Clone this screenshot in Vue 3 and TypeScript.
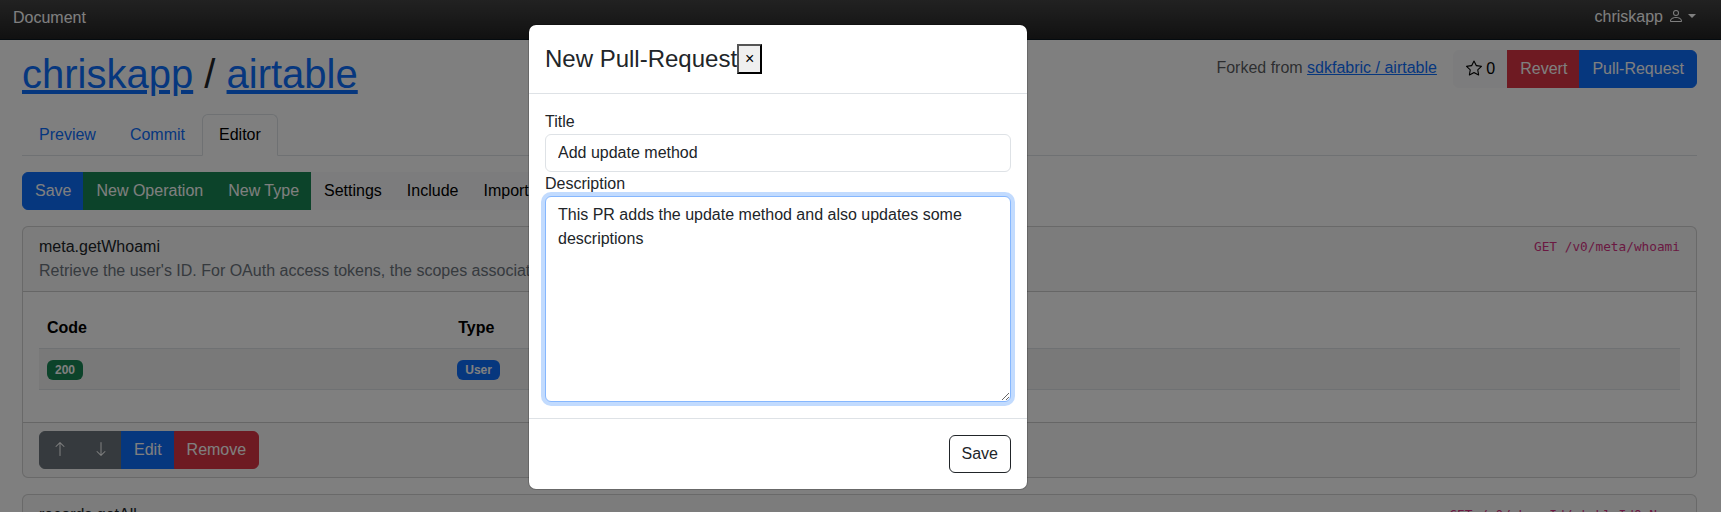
<script setup lang="ts">
import { ref } from 'vue'

interface ToolButton {
  label: string
  variant: 'primary' | 'success' | 'light'
}

const tabs: string[] = ['Preview', 'Commit', 'Editor']
const activeTab = ref('Editor')

const tools: ToolButton[] = [
  { label: 'Save', variant: 'primary' },
  { label: 'New Operation', variant: 'success' },
  { label: 'New Type', variant: 'success' },
  { label: 'Settings', variant: 'light' },
  { label: 'Include', variant: 'light' },
  { label: 'Import', variant: 'light' },
]

const title = ref('Add update method')
const description = ref('This PR adds the update method and also updates some descriptions')
</script>

<template>
  <div class="screen">
    <nav class="navbar">
      <span class="brand">Document</span>
      <span class="account">
        chriskapp
        <svg class="icon person" viewBox="0 0 16 16" fill="currentColor">
          <path d="M8 8a3 3 0 1 0 0-6 3 3 0 0 0 0 6m2-3a2 2 0 1 1-4 0 2 2 0 0 1 4 0m4 8c0 1-1 1-1 1H3s-1 0-1-1 1-4 6-4 6 3 6 4m-1-.004c-.001-.246-.154-.986-.832-1.664C11.516 10.68 10.289 10 8 10s-3.516.68-4.168 1.332c-.678.678-.83 1.418-.832 1.664z" />
        </svg>
        <i class="caret"></i>
      </span>
    </nav>

    <main class="page">
      <header class="head">
        <h1><a>chriskapp</a> / <a>airtable</a></h1>
        <div class="head-right">
          <span class="forked">Forked from <a>sdkfabric / airtable</a></span>
          <div class="group">
            <button class="btn light">
              <svg class="icon" viewBox="0 0 16 16" fill="currentColor">
                <path d="M2.866 14.85c-.078.444.36.791.746.593l4.39-2.256 4.389 2.256c.386.198.824-.149.746-.592l-.83-4.73 3.522-3.356c.33-.314.16-.888-.282-.95l-4.898-.696L8.465.792a.513.513 0 0 0-.927 0L5.354 5.12l-4.898.696c-.441.062-.612.636-.283.95l3.523 3.356-.83 4.73zm4.905-2.767-3.686 1.894.694-3.957a.56.56 0 0 0-.163-.505L1.71 6.745l4.052-.576a.53.53 0 0 0 .393-.288L8 2.223l1.847 3.658a.53.53 0 0 0 .393.288l4.052.575-2.906 2.77a.56.56 0 0 0-.163.506l.694 3.957-3.686-1.894a.5.5 0 0 0-.461 0z" />
              </svg>
              0
            </button>
            <button class="btn danger">Revert</button>
            <button class="btn primary">Pull-Request</button>
          </div>
        </div>
      </header>

      <ul class="tabs">
        <li v-for="tab in tabs" :key="tab" :class="{ active: tab === activeTab }">{{ tab }}</li>
      </ul>

      <div class="group toolbar">
        <button v-for="tool in tools" :key="tool.label" class="btn" :class="tool.variant">{{ tool.label }}</button>
      </div>

      <section class="card">
        <div class="card-header">
          <div>
            <div>meta.getWhoami</div>
            <div class="muted">Retrieve the user's ID. For OAuth access tokens, the scopes associated with the token</div>
          </div>
          <code>GET /v0/meta/whoami</code>
        </div>
        <div class="card-body">
          <table>
            <thead>
              <tr><th class="code-col">Code</th><th>Type</th></tr>
            </thead>
            <tbody>
              <tr>
                <td><span class="badge success">200</span></td>
                <td><span class="badge primary">User</span></td>
              </tr>
            </tbody>
          </table>
        </div>
        <div class="card-footer">
          <div class="group">
            <button class="btn secondary">
              <svg class="icon" viewBox="0 0 16 16" fill="currentColor">
                <path fill-rule="evenodd" d="M8 15a.5.5 0 0 0 .5-.5V2.707l3.146 3.147a.5.5 0 0 0 .708-.708l-4-4a.5.5 0 0 0-.708 0l-4 4a.5.5 0 1 0 .708.708L7.5 2.707V14.5a.5.5 0 0 0 .5.5" />
              </svg>
            </button>
            <button class="btn secondary">
              <svg class="icon" viewBox="0 0 16 16" fill="currentColor">
                <path fill-rule="evenodd" d="M8 1a.5.5 0 0 1 .5.5v11.793l3.146-3.147a.5.5 0 0 1 .708.708l-4 4a.5.5 0 0 1-.708 0l-4-4a.5.5 0 0 1 .708-.708L7.5 13.293V1.5A.5.5 0 0 1 8 1" />
              </svg>
            </button>
            <button class="btn primary">Edit</button>
            <button class="btn danger">Remove</button>
          </div>
        </div>
      </section>

      <section class="card">
        <div class="card-header">
          <div>records.getAll</div>
          <code>GET /v0/:baseId/:tableIdOrName</code>
        </div>
      </section>
    </main>

    <div class="backdrop"></div>

    <div class="modal" role="dialog">
      <div class="modal-header">
        <h4>New Pull-Request</h4>
        <button class="close">×</button>
      </div>
      <div class="modal-body">
        <label for="title">Title</label>
        <input id="title" v-model="title" class="control" type="text" />
        <label for="description">Description</label>
        <textarea id="description" v-model="description" class="control focused" rows="8" spellcheck="false"></textarea>
      </div>
      <div class="modal-footer">
        <button class="btn outline">Save</button>
      </div>
    </div>
  </div>
</template>

<style>
body {
  margin: 0;
  overflow: hidden;
}
</style>

<style scoped>
* {
  box-sizing: border-box;
}

.screen {
  position: relative;
  height: 512px;
  overflow: hidden;
  background: #fff;
  color: #212529;
  font: 16px/24px "Liberation Sans", Arial, sans-serif;
}

.navbar {
  display: flex;
  justify-content: space-between;
  height: 40px;
  padding: 5px 25px 0 13px;
  background: linear-gradient(#444, #222);
  border-bottom: 1px solid #0a161e;
  color: #fff;
}

.brand {
  padding-top: 1px;
}

.account {
  display: flex;
  align-items: center;
  height: 24px;
}

.icon {
  display: inline-block;
  width: 16px;
  height: 16px;
  vertical-align: -2px;
}

.person {
  margin: 0 4px 2px 5px;
}

.caret {
  margin-bottom: 2px;
  border-top: 4.8px solid;
  border-left: 4.8px solid transparent;
  border-right: 4.8px solid transparent;
}

.page {
  padding: 10px 24px 0 22px;
}

.head {
  display: flex;
  justify-content: space-between;
  height: 64px;
}

h1 {
  margin: 0;
  font-size: 40px;
  font-weight: 500;
  line-height: 48px;
}

a {
  color: #0d6efd;
  text-decoration: underline;
}

.head-right {
  display: flex;
  align-items: flex-start;
  gap: 16px;
}

.forked {
  padding-top: 6px;
  color: rgba(33, 37, 41, 0.75);
}

.group {
  display: inline-flex;
  vertical-align: top;
}

.group .btn + .btn {
  margin-left: -1px;
}

.group .btn:not(:first-child) {
  border-top-left-radius: 0;
  border-bottom-left-radius: 0;
}

.group .btn:not(:last-child) {
  border-top-right-radius: 0;
  border-bottom-right-radius: 0;
}

.btn {
  height: 38px;
  padding: 6px 12px;
  border: 1px solid transparent;
  border-radius: 6px;
  font: inherit;
  white-space: nowrap;
}

.primary {
  background: #0d6efd;
  border-color: #0d6efd;
  color: #fff;
}

.success {
  background: #198754;
  border-color: #198754;
  color: #fff;
}

.danger {
  background: #dc3545;
  border-color: #dc3545;
  color: #fff;
}

.secondary {
  background: #6c757d;
  border-color: #6c757d;
  color: #fff;
}

.light {
  background: #f8f9fa;
  border-color: #f8f9fa;
  color: #000;
}

.outline {
  background: transparent;
  border-color: #212529;
  color: #212529;
}

.tabs {
  display: flex;
  margin: 0 0 16px;
  padding: 0;
  list-style: none;
  border-bottom: 1px solid #dee2e6;
}

.tabs li {
  height: 42px;
  margin-bottom: -1px;
  padding: 8px 16px;
  border: 1px solid transparent;
  border-radius: 6px 6px 0 0;
  color: #0d6efd;
}

.tabs .active {
  background: #fff;
  border-color: #dee2e6 #dee2e6 #fff;
  color: #000;
}

.toolbar {
  display: flex;
  margin-bottom: 16px;
}

.card {
  margin-bottom: 16px;
  border: 1px solid rgba(0, 0, 0, 0.176);
  border-radius: 6px;
}

.card-header {
  display: flex;
  justify-content: space-between;
  padding: 8px 16px;
  background: rgba(33, 37, 41, 0.03);
  border-bottom: 1px solid rgba(0, 0, 0, 0.176);
}

.muted {
  color: #6c757d;
}

code {
  color: #d63384;
  font: 12.78px/24px "DejaVu Sans Mono", monospace;
}

.card-body {
  padding: 16px;
}

table {
  width: 100%;
  margin-bottom: 16px;
  border-collapse: separate;
  border-spacing: 0;
  table-layout: fixed;
  color: #000;
}

.code-col {
  width: 25%;
}

th,
td {
  height: 41px;
  padding: 8px;
  line-height: 24px;
  text-align: left;
  border-bottom: 1px solid #dee2e6;
}

td {
  background: rgba(0, 0, 0, 0.05);
}

td:last-child,
th:last-child {
  padding-left: 9px;
}

.badge {
  display: block;
  width: fit-content;
  margin: 3px 0 1px;
  padding: 4px 8px;
  border-radius: 6px;
  font-size: 12px;
  font-weight: 700;
  line-height: 12px;
}

td + td .badge {
  margin-left: -1px;
}

.card-footer {
  padding: 8px 16px;
  background: rgba(33, 37, 41, 0.03);
  border-top: 1px solid rgba(0, 0, 0, 0.176);
}

.backdrop {
  position: absolute;
  inset: 0;
  background: rgba(0, 0, 0, 0.5);
}

.modal {
  position: absolute;
  top: 24px;
  left: 528px;
  width: 500px;
  background: #fff;
  background-clip: padding-box;
  border: 1px solid rgba(0, 0, 0, 0.176);
  border-radius: 8px;
}

.modal-header {
  display: flex;
  align-items: center;
  padding: 16px;
  border-bottom: 1px solid #dee2e6;
}

h4 {
  margin: 0;
  font-size: 24px;
  font-weight: 500;
  line-height: 36px;
}

.close {
  padding: 1px 6px;
  background: #efefef;
  border: 2px solid;
  border-color: #555 #000 #000 #555;
  color: #000;
  font: inherit;
}

.modal-body {
  padding: 16px;
}

label {
  display: block;
}

.control {
  display: block;
  width: 100%;
  margin: 0;
  padding: 6px 12px;
  background: #fff;
  border: 1px solid #dee2e6;
  border-radius: 6px;
  outline: 0;
  color: #212529;
  font: inherit;
}

input.control {
  height: 38px;
}

textarea.control {
  height: 206px;
  resize: vertical;
}

.focused {
  border-color: #86b7fe;
  box-shadow: 0 0 0 4px rgba(13, 110, 253, 0.25);
}

.modal-footer {
  display: flex;
  justify-content: flex-end;
  padding: 16px;
  border-top: 1px solid #dee2e6;
}
</style>
